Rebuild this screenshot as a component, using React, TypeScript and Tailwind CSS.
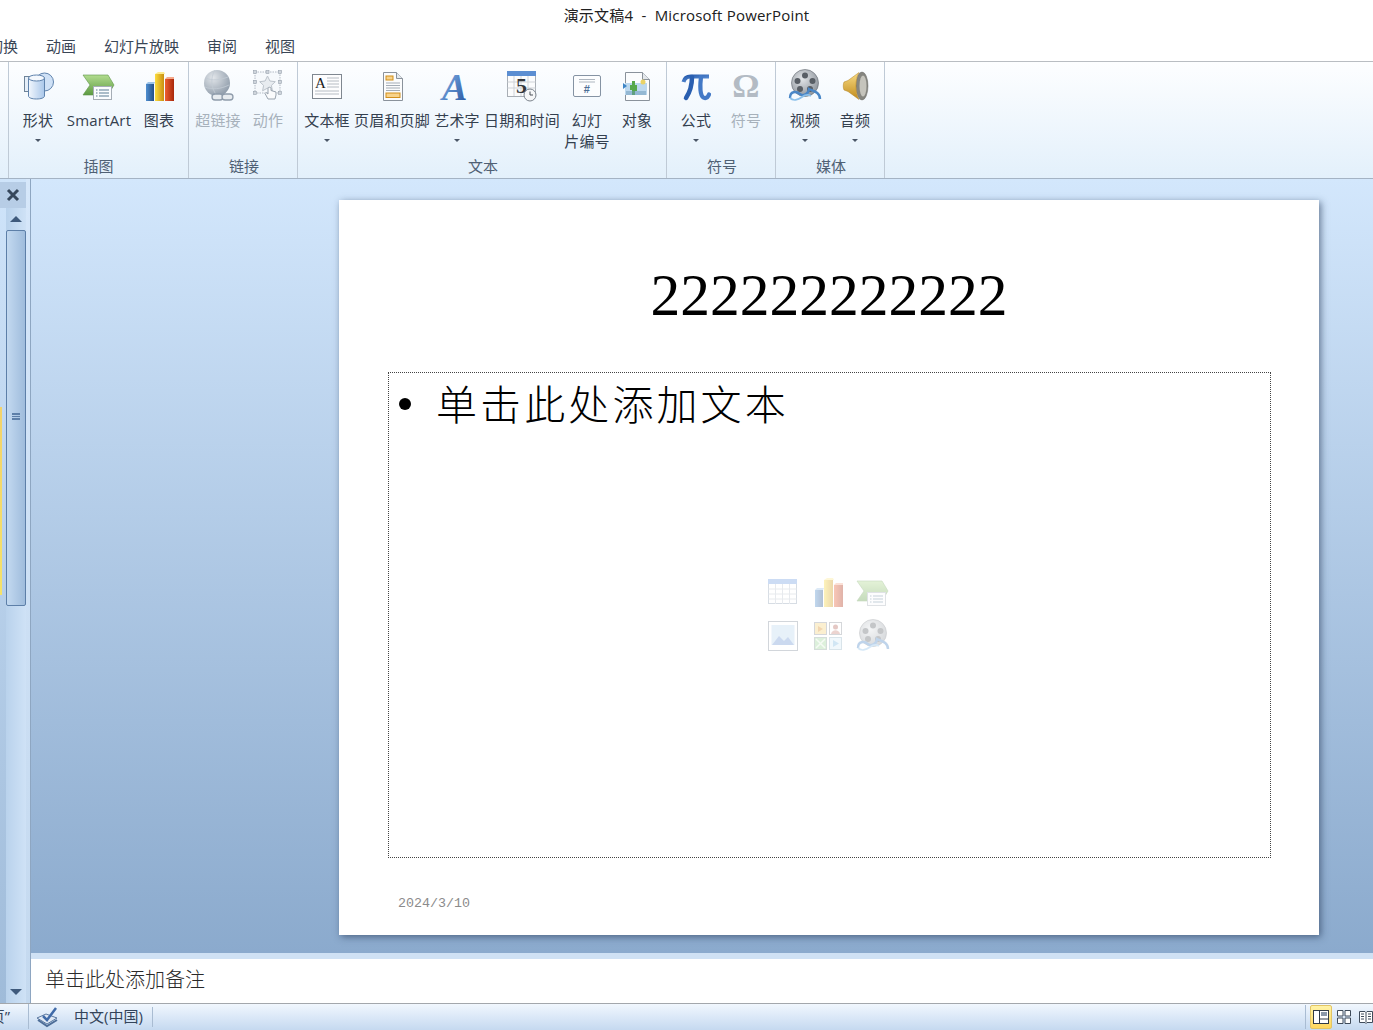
import type { ReactNode } from 'react'

function Svg({ children }: { children: ReactNode }) {
  return (
    <svg width="36" height="36" viewBox="0 0 36 36" className="block">
      {children}
    </svg>
  )
}

function Grad({ id, from, to, x2 = 0, y2 = 1 }: { id: string; from: string; to: string; x2?: number; y2?: number }) {
  return (
    <linearGradient id={id} x1="0" y1="0" x2={x2} y2={y2}>
      <stop offset="0" stopColor={from} />
      <stop offset="1" stopColor={to} />
    </linearGradient>
  )
}

function ShapesIcon() {
  return (
    <Svg>
      <defs>
        <Grad id="sh1" from="#f2f7fd" to="#a9c7ea" x2={1} y2={0} />
      </defs>
      <circle cx="24.500" cy="14" r="9" fill="#cfe1f6" stroke="#5f83ad" />
      <rect x="4.500" y="8.500" width="14" height="15" fill="#e6eff9" stroke="#6f8499" />
      <path d="M8.500 10v18c0 1.800 3.500 3 8 3s8-1.200 8-3V10z" fill="url(#sh1)" stroke="#5f83ad" />
      <ellipse cx="16.500" cy="10" rx="8" ry="3" fill="#f4f8fd" stroke="#5f83ad" />
    </Svg>
  )
}

function SmartArtIcon() {
  return (
    <Svg>
      <defs>
        <Grad id="sa1" from="#b2dc8f" to="#5c9a42" />
      </defs>
      <path d="M2 7h25l6 10-6 10H2l7-10z" fill="url(#sa1)" stroke="#5c9447" strokeWidth="0.600" />
      <rect x="12.500" y="18.500" width="18" height="13" fill="#fafcfe" stroke="#a5adb6" />
      <path d="M15 22h1.500M18 22h10M15 25h1.500M18 25h10M15 28h1.500M18 28h10" stroke="#5b7d93" strokeWidth="1" />
    </Svg>
  )
}

function ChartIcon() {
  return (
    <Svg>
      <defs>
        <Grad id="ch1" from="#4f8fd0" to="#234f88" x2={1} y2={0} />
        <Grad id="ch2" from="#fbdc3e" to="#c98f10" x2={1} y2={0} />
        <Grad id="ch3" from="#ee5f30" to="#a8280c" x2={1} y2={0} />
      </defs>
      <rect x="5" y="16" width="8" height="17" fill="url(#ch1)" />
      <path d="M5 16l2-2h7l-1 2z" fill="#9cc3e8" />
      <rect x="14" y="6" width="9" height="27" fill="url(#ch2)" />
      <path d="M14 6l3-2h6l1 2z" fill="#fdeb8f" />
      <rect x="24" y="11" width="9" height="22" fill="url(#ch3)" />
      <path d="M24 11l2-2h7v2z" fill="#f5a98b" />
    </Svg>
  )
}

function LinkIcon() {
  return (
    <Svg>
      <defs>
        <radialGradient id="li1" cx="0.350" cy="0.300" r="0.800">
          <stop offset="0" stopColor="#e2e6ea" />
          <stop offset="1" stopColor="#8a97a6" />
        </radialGradient>
      </defs>
      <circle cx="17" cy="15" r="13" fill="url(#li1)" />
      <path d="M6 10c6 3 14 2 22-1M5 19c7 3 16 2 24-2M15 2c-5 8-4 18 2 26" stroke="#c3cbd4" fill="none" strokeWidth="0.800" />
      <rect x="12" y="26" width="11" height="6" rx="3" fill="#e8ecf0" stroke="#8f9cab" strokeWidth="1.300" />
      <rect x="22" y="26" width="11" height="6" rx="3" fill="#e8ecf0" stroke="#8f9cab" strokeWidth="1.300" />
    </Svg>
  )
}

function ActionIcon() {
  const pts = [[5, 4], [17.500, 4], [30, 4], [5, 14], [30, 14], [5, 25], [30, 25]]
  return (
    <Svg>
      <rect x="5" y="4" width="25" height="21" fill="#f6f9fc" stroke="#b3bbc4" strokeDasharray="1.500 1" />
      <path d="M17.500 8l2.400 5 5.400.700-3.900 3.700 1 5.400-4.900-2.700-4.900 2.700 1-5.400-3.900-3.700 5.400-.700z" fill="#e8ecf0" stroke="#bcc3cb" />
      {pts.map((p) => (
        <rect key={p.join()} x={p[0] - 1.500} y={p[1] - 1.500} width="3" height="3" fill="#cfd5dc" stroke="#98a2ad" strokeWidth="0.600" />
      ))}
      <path d="M18 20v6l-2-1.500-1 1 3 5.500h7l1-4v-3l-5-1.500v-2.500c0-1-3-1-3 0z" fill="#fafbfc" stroke="#9aa4af" />
    </Svg>
  )
}

function TextBoxIcon() {
  return (
    <Svg>
      <rect x="3.500" y="6.500" width="29" height="24" fill="#fdfdfe" stroke="#7f8790" />
      <text x="6" y="20" fontFamily="'Liberation Serif', serif" fontSize="15" fontWeight="400" fill="#1c1c1c">A</text>
      <path d="M18 10h12M18 13h12M18 16h12M18 19h12M6 23h24M6 26h24" stroke="#b6bcc3" strokeWidth="1" />
    </Svg>
  )
}

function HeaderFooterIcon() {
  return (
    <Svg>
      <path d="M9.500 4.500h13l6 6v22h-19z" fill="#fbfcfd" stroke="#8a929b" />
      <path d="M22.500 4.500v6h6" fill="#e4e8ec" stroke="#8a929b" />
      <rect x="12" y="8" width="7" height="4" fill="#f8d38a" stroke="#d18f1d" />
      <path d="M12 15h14M12 17.500h14M12 20h14M12 22.500h14" stroke="#a5adb6" />
      <rect x="12" y="25" width="14" height="4.500" fill="#f8d38a" stroke="#d18f1d" />
    </Svg>
  )
}

function WordArtIcon() {
  return (
    <Svg>
      <defs>
        <Grad id="wa1" from="#8dbcf0" to="#1f4f9c" x2={1} y2={1} />
      </defs>
      <text x="3" y="32" fontFamily="'Liberation Serif', serif" fontSize="38" fontWeight="700" fontStyle="italic" fill="url(#wa1)">A</text>
    </Svg>
  )
}

function DateIcon() {
  return (
    <Svg>
      <rect x="3.500" y="3.500" width="28" height="25" fill="#fbfcfd" stroke="#a8aeb5" />
      <rect x="3" y="3" width="29" height="5" fill="#5b8ed2" />
      <path d="M3.500 14h28M3.500 20h28M10 8v20M17 8v20M24 8v20" stroke="#cfd3d8" />
      <text x="12" y="25" fontFamily="'Liberation Serif', serif" fontSize="22" fontWeight="700" fill="#33373c">5</text>
      <circle cx="26" cy="27" r="6" fill="#f6f7f8" stroke="#7b838c" />
      <path d="M26 23.500V27h3" stroke="#4b5158" fill="none" />
    </Svg>
  )
}

function SlideNumberIcon() {
  return (
    <Svg>
      <rect x="4.500" y="7.500" width="27" height="21" rx="1.500" fill="#fcfdfe" stroke="#8593a3" />
      <path d="M10 11.500h16M10 14h16" stroke="#aeb6bf" />
      <text x="18" y="25" textAnchor="middle" fontFamily="'Liberation Sans', sans-serif" fontSize="11" fontWeight="700" fill="#4d6f96">#</text>
    </Svg>
  )
}

function ObjectIcon() {
  return (
    <Svg>
      <path d="M6.500 4.500h17l7 7v21h-24z" fill="#fbfcfd" stroke="#8a929b" />
      <path d="M23.500 4.500v7h7" fill="#e4e8ec" stroke="#8a929b" />
      <rect x="6" y="15" width="22" height="12" fill="#bcd8ee" />
      <path d="M4 15l4 3-4 3z" fill="#3c84c6" />
      <path d="M13 13h3v4h2v6h-2v4h-3v-5h-2v-5h2z" fill="#56a84a" />
      <circle cx="24" cy="14" r="2.500" fill="#e9d266" />
      <path d="M7 24h20M7 26h20" stroke="#6d98b8" />
    </Svg>
  )
}

function PiIcon() {
  return (
    <Svg>
      <defs>
        <Grad id="pi1" from="#2a5fb0" to="#6da0e2" x2={1} y2={1} />
      </defs>
      <path d="M5.500 14c1-4 3-5.500 7-5.500h18.500" fill="none" stroke="url(#pi1)" strokeWidth="4" />
      <path d="M14 9c0 8-2 15-6 21" fill="none" stroke="#2a5fb0" strokeWidth="4.500" strokeLinecap="round" />
      <path d="M23 9c-1 8-1.500 20 3.500 21 2 .300 3.500-1 4.500-3.500" fill="none" stroke="#4379c6" strokeWidth="4.200" strokeLinecap="round" />
    </Svg>
  )
}

function OmegaIcon() {
  return (
    <Svg>
      <text x="18" y="29" textAnchor="middle" fontFamily="'Liberation Serif', serif" fontSize="34" fontWeight="700" fill="#b3bbc4">Ω</text>
    </Svg>
  )
}

function VideoIcon() {
  return (
    <Svg>
      <defs>
        <radialGradient id="vi1" cx="0.400" cy="0.350" r="0.750">
          <stop offset="0" stopColor="#e2e5e8" />
          <stop offset="1" stopColor="#858c94" />
        </radialGradient>
      </defs>
      <circle cx="18" cy="15" r="13.500" fill="url(#vi1)" stroke="#70767d" strokeWidth="0.700" />
      <circle cx="18" cy="7.500" r="3" fill="#585e65" />
      <circle cx="10.500" cy="13" r="3" fill="#585e65" />
      <circle cx="25.500" cy="13" r="3" fill="#585e65" />
      <circle cx="13" cy="21" r="3" fill="#585e65" />
      <circle cx="23" cy="21" r="3" fill="#585e65" />
      <path d="M3 30c0-7 6-7 10-4 4 3 9-1 9-5 4 2 11 3 11 10" fill="none" stroke="#4a87c7" strokeWidth="2.400" />
      <path d="M3 30c3 3 8 2 12-1 3-2 6-3 9-1" fill="none" stroke="#8cc0ea" strokeWidth="1.800" />
    </Svg>
  )
}

function AudioIcon() {
  return (
    <Svg>
      <defs>
        <Grad id="au1" from="#f9dc84" to="#c08a1a" />
      </defs>
      <ellipse cx="25" cy="18" rx="6" ry="14" fill="#85857f" stroke="#6c6c69" strokeWidth="0.500" />
      <ellipse cx="26" cy="18" rx="3.500" ry="10.500" fill="#c5c4bc" />
      <path d="M7 14l4-1.500L22 4.500C18 10 18 26 22 31.500L11 23.500 7 22c-1-2-1-6 0-8z" fill="url(#au1)" stroke="#b38320" strokeWidth="0.500" />
    </Svg>
  )
}

function TableIcon() {
  return (
    <Svg>
      <rect x="3.500" y="5.500" width="28" height="24" fill="#fff" stroke="#8e9fb3" />
      <rect x="3" y="5" width="29" height="5" fill="#6f9ee0" />
      <path d="M3.500 15h28M3.500 20h28M3.500 25h28M10.500 10v20M17.500 10v20M24.500 10v20" stroke="#bcc6d1" />
    </Svg>
  )
}

function PictureIcon() {
  return (
    <Svg>
      <rect x="3.500" y="3.500" width="29" height="29" fill="#fff" stroke="#7f8c9a" />
      <rect x="6.500" y="7" width="23" height="20" fill="#bcd8f0" />
      <path d="M7 27l7-9 5 5 4-4 6 8z" fill="#6d93d4" />
    </Svg>
  )
}

function ClipartIcon() {
  return (
    <Svg>
      <rect x="4.500" y="4.500" width="12" height="12" fill="#f6d47a" stroke="#8a8f96" />
      <path d="M8 8l5 3-5 3z" fill="#d98a20" />
      <rect x="19.500" y="4.500" width="12" height="12" fill="#fff" stroke="#8a8f96" />
      <circle cx="25.500" cy="9" r="2.500" fill="#b4655a" />
      <path d="M21 16c1-5 8-5 9 0z" fill="#c9857b" />
      <rect x="4.500" y="19.500" width="12" height="12" fill="#9ed59a" stroke="#8a9f96" />
      <path d="M6 21l9 9M15 21l-9 9" stroke="#e3f4e1" strokeWidth="1.500" />
      <rect x="19.500" y="19.500" width="12" height="12" fill="#d8ecf8" stroke="#94b3c6" />
      <path d="M23 22l6 3.500-6 3.500z" fill="#7eb8e2" />
    </Svg>
  )
}

function RibbonItem({ icon, label, second, w = 'w-[50px]', caret, muted }: { icon: ReactNode; label: string; second?: string; w?: string; caret?: boolean; muted?: boolean }) {
  return (
    <div className={`${w} flex flex-col items-center tracking-[0.2px] ${muted ? 'text-[#a7b1bb]' : 'text-[#34404f]'}`}>
      <div className="h-[36px] w-[36px]">{icon}</div>
      <div className="mt-[6px] h-[21px] whitespace-nowrap text-[15px] leading-[21px]">{label}</div>
      {second && <div className="h-[21px] whitespace-nowrap text-[15px] leading-[21px]">{second}</div>}
      {caret && (
        <div className="flex h-[20px] items-center">
          <div className="h-0 w-0 border-x-[3px] border-t-[3px] border-x-transparent border-t-[#4a5667]" />
        </div>
      )}
    </div>
  )
}

function RibbonGroup({ w, label, pad = 'pl-[2px]', children }: { w: string; label: string; pad?: string; children: ReactNode }) {
  return (
    <div className={`${w} flex shrink-0 flex-col border-r border-[#bfcad6]`}>
      <div className="flex h-[87px] pl-1 pt-[6px]">{children}</div>
      <div className={`${pad} h-[29px] pt-[7px] text-center text-[15px] leading-[21px] text-[#4f6074]`}>{label}</div>
    </div>
  )
}

export default function App() {
  return (
    <div className="flex h-[1030px] w-[1373px] flex-col overflow-hidden bg-white font-['Open_Sans','Noto_Sans_CJK_SC',sans-serif] text-[15px]">
      {/* title bar */}
      <div className="flex h-[31px] shrink-0 items-center justify-center whitespace-pre tracking-[0.2px] text-[#202020]">演示文稿4  -  Microsoft PowerPoint</div>

      {/* tabs */}
      <div className="flex h-[31px] shrink-0 items-center gap-7 border-b border-[#b9bdc2] -ml-3 text-[#3a4656]">
        <span>切换</span>
        <span>动画</span>
        <span>幻灯片放映</span>
        <span>审阅</span>
        <span>视图</span>
      </div>

      {/* ribbon */}
      <div className="flex h-[117px] shrink-0 border-b border-[#a4b3c4] bg-gradient-to-b from-[#fdfeff] to-[#e3f0fb]">
        <div className="w-[9px] shrink-0 border-r border-[#bfcad6]" />
        <RibbonGroup w="w-[180px]" label="插图" pad="pl-0">
          <RibbonItem icon={<ShapesIcon />} label="形状" caret />
          <RibbonItem icon={<SmartArtIcon />} label="SmartArt" w="w-[72px]" />
          <RibbonItem icon={<ChartIcon />} label="图表" w="w-[48px]" />
        </RibbonGroup>
        <RibbonGroup w="w-[109px]" label="链接">
          <RibbonItem icon={<LinkIcon />} label="超链接" muted />
          <RibbonItem icon={<ActionIcon />} label="动作" muted />
        </RibbonGroup>
        <RibbonGroup w="w-[369px]" label="文本">
          <RibbonItem icon={<TextBoxIcon />} label="文本框" caret />
          <RibbonItem icon={<HeaderFooterIcon />} label="页眉和页脚" w="w-[80px]" />
          <RibbonItem icon={<WordArtIcon />} label="艺术字" caret />
          <RibbonItem icon={<DateIcon />} label="日期和时间" w="w-[80px]" />
          <RibbonItem icon={<SlideNumberIcon />} label="幻灯" second="片编号" />
          <RibbonItem icon={<ObjectIcon />} label="对象" />
        </RibbonGroup>
        <RibbonGroup w="w-[109px]" label="符号">
          <RibbonItem icon={<PiIcon />} label="公式" caret />
          <RibbonItem icon={<OmegaIcon />} label="符号" muted />
        </RibbonGroup>
        <RibbonGroup w="w-[109px]" label="媒体">
          <RibbonItem icon={<VideoIcon />} label="视频" caret />
          <RibbonItem icon={<AudioIcon />} label="音频" caret />
        </RibbonGroup>
      </div>

      {/* main */}
      <div className="flex min-h-0 flex-1">
        {/* thumbnail pane edge + scrollbar */}
        <div className="flex w-[26px] shrink-0 flex-col bg-gradient-to-b from-[#cfe4fa] to-[#9fbbd9] pt-[3px]">
          <div className="flex h-[26px] shrink-0 items-center justify-center bg-[#b7cde6]">
            <svg width="14" height="14" viewBox="0 0 14 14">
              <path d="M2 2l10 10M12 2L2 12" stroke="#36475c" strokeWidth="3" />
            </svg>
          </div>
          <div className="flex min-h-0 flex-1">
            <div className="w-[6px] shrink-0 pt-[199px]">
              <div className="h-[188px] w-[2px] bg-gradient-to-b from-[#f3d36b] to-[#f5e26a]" />
            </div>
            <div className="flex w-[20px] flex-col items-center bg-gradient-to-r from-[#b9d2ec] to-[#cfe2f6]">
              <div className="mt-[8px] h-0 w-0 border-x-[6px] border-b-[6px] border-x-transparent border-b-[#3f5a7c]" />
              <div className="relative mt-[8px] flex h-[376px] w-[20px] items-center justify-center rounded-[2px] border border-[#5d7fa8] bg-gradient-to-r from-[#c3d9f0] to-[#9fbcdc] pb-[3px]">
                <div className="h-[7px] w-[8px] border-y border-[#5d7fa8] bg-[linear-gradient(#5d7fa8_1px,transparent_1px)] bg-[length:8px_2px]" />
              </div>
              <div className="flex-1" />
              <div className="mb-[8px] h-0 w-0 border-x-[6px] border-t-[6px] border-x-transparent border-t-[#3f5a7c]" />
            </div>
          </div>
        </div>
        <div className="w-[5px] shrink-0 border-r border-[#8ea6c1] bg-gradient-to-b from-[#d6e7fa] to-[#c4d9ef]" />

        {/* editor */}
        <div className="flex min-w-0 flex-1 flex-col">
          <div className="min-h-0 flex-1 bg-gradient-to-b from-[#d3e7fc] to-[#8baacd] pl-[308px] pt-[21px]">
            <div className="flex h-[735px] w-[980px] flex-col bg-white font-['Liberation_Serif','Noto_Sans_CJK_SC',serif] shadow-[2px_2px_7px_rgba(45,65,95,0.65)]">
              <div className="flex h-[172px] shrink-0 items-center justify-center pt-[20px] text-[59.500px] leading-none text-black">222222222222</div>
              <div className="relative ml-[49px] h-[486px] w-[883px] shrink-0 border border-dotted border-[#444]">
                <div className="flex items-center pl-[10px] pt-[3px] font-['Noto_Sans_CJK_SC',serif] text-[41px] font-light leading-[58px] tracking-[3.100px] text-black">
                  <div className="h-[12px] w-[12px] rounded-full bg-black" />
                  <div className="ml-[25px] -mt-[3px]">单击此处添加文本</div>
                </div>
                <div className="absolute inset-0 flex items-center justify-center pb-[3px] pr-[3px]">
                  <div className="grid grid-cols-[45px_45px_45px] grid-rows-[44px_44px] place-items-center opacity-35">
                    <TableIcon />
                    <ChartIcon />
                    <SmartArtIcon />
                    <PictureIcon />
                    <ClipartIcon />
                    <VideoIcon />
                  </div>
                </div>
              </div>
              <div className="pl-[59px] pt-[37px] font-['Liberation_Mono',monospace] text-[13.330px] leading-[18px] text-[#8b8b8b]">2024/3/10</div>
            </div>
          </div>
          <div className="h-[6px] shrink-0 bg-[#cfe1f4]" />
          <div className="flex h-[44px] shrink-0 items-center bg-white pb-[4px] pl-[14px] font-['Noto_Sans_CJK_SC',serif] text-[20px] font-light text-[#2a2a2a]">单击此处添加备注</div>
        </div>
      </div>

      {/* status bar */}
      <div className="flex h-[27px] shrink-0 items-center border-t border-[#a3a7ac] bg-gradient-to-b from-[#f1f7fe] to-[#c5d9f0] pb-[1px] text-[15px] text-[#33445a]">
        <div className="flex h-full w-[29px] shrink-0 items-center justify-end overflow-hidden border-r border-[#a9bcd2] pr-[18px]">
          <span className="whitespace-nowrap">页”</span>
        </div>
        <svg width="26" height="24" viewBox="0 0 26 24" className="ml-[6px] shrink-0">
          <path d="M2 13l9-4 11 4-10 6z" fill="#dfe8f4" stroke="#5a78a0" />
          <path d="M3 15l9 6 10-6" fill="none" stroke="#4d6d98" strokeWidth="2" />
          <path d="M8 11l4 4 9-12" fill="none" stroke="#3f6aa8" strokeWidth="2.500" />
        </svg>
        <span className="ml-[13px] whitespace-nowrap">中文(中国)</span>
        <div className="ml-[9px] h-[20px] border-r border-[#a9bcd2]" />
        <div className="flex-1" />
        <div className="mr-[4px] h-[24px] border-r border-[#a9bcd2]" />
        <div className="flex h-[24px] w-[22px] items-center justify-center rounded-[2px] border border-[#e3c565] bg-gradient-to-b from-[#fff3a6] to-[#ffd75c]">
          <svg width="16" height="14" viewBox="0 0 16 14">
            <rect x="0.500" y="0.500" width="15" height="13" fill="#fff" stroke="#303a46" />
            <path d="M6.500 1v12M7 9h8" stroke="#303a46" />
            <rect x="8" y="2" width="6" height="4" fill="#8b98a8" />
          </svg>
        </div>
        <svg width="14" height="14" viewBox="0 0 14 14" className="ml-[5px]">
          <path d="M.5.5h5.500v5.500H.5zM8 .5h5.500v5.500H8zM.5 8h5.500v5.500H.5zM8 8h5.500v5.500H8z" fill="#fff" stroke="#3f4b5a" />
        </svg>
        <svg width="14" height="14" viewBox="0 0 14 14" className="ml-[8px]">
          <path d="M.5 1.500h5.500l1 1 1-1h5.500v11H8l-1 1-1-1H.5zM7 2.500v10M2 4h3M2 6.500h3M2 9h3M9 4h3M9 6.500h3M9 9h3" fill="#fff" stroke="#3f4b5a" />
        </svg>
      </div>
    </div>
  )
}
